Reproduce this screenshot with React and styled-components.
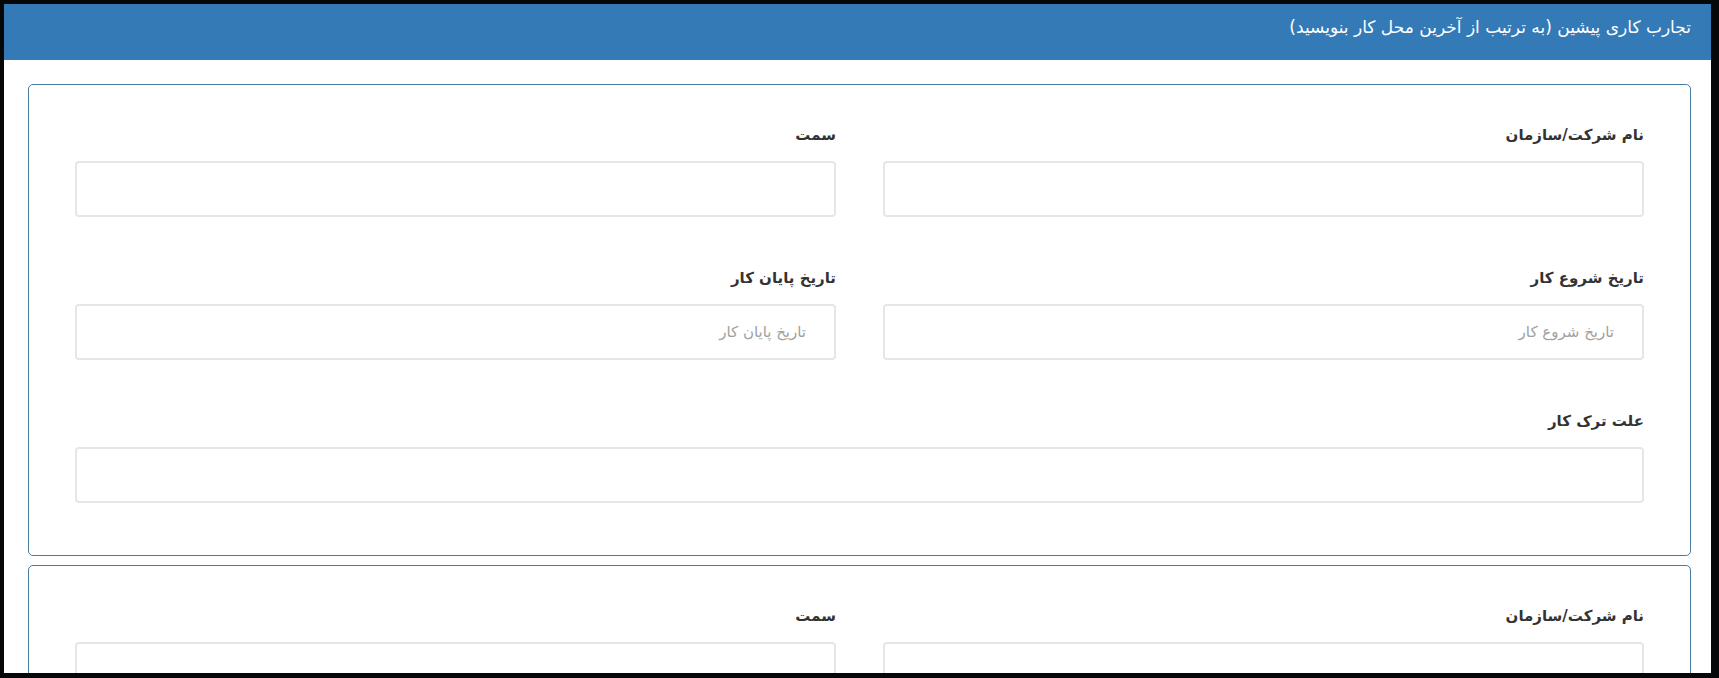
import React from "react";
import styled, { createGlobalStyle } from "styled-components";

const GlobalStyle = createGlobalStyle`
  html, body {
    margin: 0;
    padding: 0;
    background: #050708;
  }
  * {
    box-sizing: border-box;
  }
`;

const experiences = [1, 2];

function App() {
  return (
    <>
      <GlobalStyle />
      <Frame>
        <Panel>
          <PanelHeader>تجارب کاری پیشین (به ترتیب از آخرین محل کار بنویسید)</PanelHeader>
          <PanelBody>
            {experiences.map(item => (
              <Card key={item}>
                <FieldGrid>
                  <Field>
                    <Label>نام شرکت/سازمان</Label>
                    <Input type="text" />
                  </Field>
                  <Field>
                    <Label>سمت</Label>
                    <Input type="text" />
                  </Field>
                  <Field>
                    <Label>تاریخ شروع کار</Label>
                    <Input type="text" placeholder="تاریخ شروع کار" />
                  </Field>
                  <Field>
                    <Label>تاریخ پایان کار</Label>
                    <Input type="text" placeholder="تاریخ پایان کار" />
                  </Field>
                  <Field wide>
                    <Label>علت ترک کار</Label>
                    <Input type="text" />
                  </Field>
                </FieldGrid>
              </Card>
            ))}
          </PanelBody>
        </Panel>
      </Frame>
    </>
  );
}

const Frame = styled.div`
  height: 678px;
  padding: 4px 8px 5px 4px;
  overflow: hidden;
  font-family: "DejaVu Sans", "Noto Sans", sans-serif;
`;

const Panel = styled.div`
  height: 100%;
  background: #ffffff;
  direction: rtl;
  overflow: hidden;
`;

const PanelHeader = styled.div`
  height: 56px;
  display: flex;
  align-items: center;
  padding: 0 20px 10px;
  background: #337ab7;
  color: #ffffff;
  font-size: 17px;
`;

const PanelBody = styled.div`
  display: flex;
  flex-direction: column;
  gap: 9px;
  padding: 24px 20px 0 24px;
`;

const Card = styled.div`
  border: 1px solid #4a7c9f;
  border-radius: 5px;
  padding: 39px 46px 52px;
`;

const FieldGrid = styled.div`
  display: grid;
  grid-template-columns: 1fr 1fr;
  column-gap: 47px;
  row-gap: 50px;
`;

const Field = styled.div`
  display: flex;
  flex-direction: column;
  grid-column: ${props => (props.wide ? "1 / -1" : "auto")};
`;

const Label = styled.label`
  height: 22px;
  margin-bottom: 15px;
  font-size: 15px;
  font-weight: bold;
  line-height: 22px;
  color: #333333;
`;

const Input = styled.input`
  height: 56px;
  padding: 0 28px;
  border: 2px solid #e6e6e6;
  border-radius: 4px;
  background: #ffffff;
  font-family: inherit;
  font-size: 15px;
  color: #555555;
  direction: rtl;
  outline: none;

  &::placeholder {
    color: #a0a0a0;
  }
`;

export default App;
